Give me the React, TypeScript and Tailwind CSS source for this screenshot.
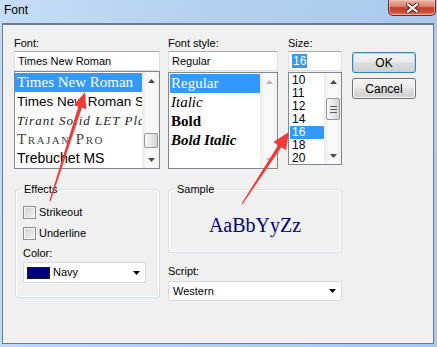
import React from 'react';

const sans = "font-['Liberation_Sans',Arial,sans-serif]";
const serif = "font-['Liberation_Serif','Times_New_Roman',serif]";

const Tri: React.FC<{ down?: boolean; color?: string }> = ({ down, color = '#3f3f3f' }) => (
  <svg width="7" height="4" viewBox="0 0 7 4">
    <path d={down ? 'M0 0H7L3.5 4Z' : 'M0 4H7L3.5 0Z'} fill={color} />
  </svg>
);

// win7 list scrollbar; thumbClass carries the offset/height of the thumb
const ScrollBar: React.FC<{ thumbClass?: string; grip?: boolean; disabled?: boolean }> = ({
  thumbClass,
  grip,
  disabled,
}) => {
  const arrow = disabled ? '#b8b8b8' : '#4a4a4a';
  return (
    <div className="flex w-[17px] shrink-0 flex-col border-l border-[#ececec] bg-[linear-gradient(90deg,#eeeeee,#f8f8f8_25%,#f8f8f8_75%,#efefef)]">
      <div className="flex h-[17px] items-center justify-center">
        <Tri color={arrow} />
      </div>
      <div className="flex-1 px-[1px]">
        {thumbClass && (
          <div
            className={`flex flex-col items-center justify-center gap-[2px] rounded-[2px] border border-[#979797] bg-[linear-gradient(90deg,#f5f5f5,#e8e8e8_50%,#d4d4d4)] ${thumbClass}`}
          >
            {grip && (
              <>
                <div className="h-[1px] w-[7px] bg-[#5e5e5e]" />
                <div className="h-[1px] w-[7px] bg-[#5e5e5e]" />
                <div className="h-[1px] w-[7px] bg-[#5e5e5e]" />
              </>
            )}
          </div>
        )}
      </div>
      <div className="flex h-[17px] items-center justify-center">
        <Tri down color={arrow} />
      </div>
    </div>
  );
};

const TextBox: React.FC<{ className?: string; children: React.ReactNode }> = ({ className = '', children }) => (
  <div
    className={`flex h-[20px] items-center border border-[#dbdfe6] border-t-[#abadb3] bg-white pl-[3px] ${className}`}
  >
    {children}
  </div>
);

const Label: React.FC<{ children: React.ReactNode; className?: string }> = ({ children, className = '' }) => (
  <div className={`h-[14px] leading-[13px] ${className}`}>{children}</div>
);

const Button: React.FC<{ children: React.ReactNode; focused?: boolean; className?: string }> = ({
  children,
  focused,
  className = '',
}) => (
  <div
    className={`flex h-[21px] w-[64px] items-center justify-center rounded-[3px] border text-[12px] bg-[linear-gradient(#f2f2f2_0%,#ebebeb_48%,#dddddd_52%,#cfcfcf_100%)] ${
      focused ? 'border-[#3c7fb1] shadow-[inset_0_0_0_1px_#a7dcf7]' : 'border-[#707070] shadow-[inset_0_0_0_1px_#fbfbfb]'
    } ${className}`}
  >
    {children}
  </div>
);

const CheckRow: React.FC<{ label: string; className?: string }> = ({ label, className = '' }) => (
  <div className={`flex h-[13px] items-center gap-[3px] ${className}`}>
    <div className="h-[13px] w-[13px] border border-[#8e8f8f] bg-[linear-gradient(135deg,#cfd1d4,#f3f3f3)] shadow-[inset_0_0_0_1px_#f4f4f4]" />
    <span className="leading-[13px]">{label}</span>
  </div>
);

const arrowPoints = (tx: number, ty: number, px: number, py: number, hl: number, hw: number) => {
  const dx = px - tx;
  const dy = py - ty;
  const len = Math.hypot(dx, dy);
  const ux = dx / len;
  const uy = dy / len;
  const nx = -uy;
  const ny = ux;
  const bx = px - ux * hl;
  const by = py - uy * hl;
  const pts = [
    [tx + nx * 0.6, ty + ny * 0.6],
    [bx + nx * 1.9, by + ny * 1.9],
    [bx + (nx * hw) / 2, by + (ny * hw) / 2],
    [px, py],
    [bx - (nx * hw) / 2, by - (ny * hw) / 2],
    [bx - nx * 1.9, by - ny * 1.9],
    [tx - nx * 0.6, ty - ny * 0.6],
  ];
  return pts.map((p) => p.map((v) => v.toFixed(1)).join(',')).join(' ');
};

const fontRows = [
  { label: 'Times New Roman', cls: `${serif} text-[15px]`, selected: true },
  { label: 'Times New Roman S', cls: `${sans} text-[13.5px]` },
  { label: 'Tirant Solid LET Plain', cls: `${serif} italic text-[13px] tracking-[1px] text-[#222]` },
  { label: 'Trajan Pro', cls: `${serif} text-[15px] [font-variant:small-caps] tracking-[1.5px] text-[#444]` },
  { label: 'Trebuchet MS', cls: `${sans} text-[14px]` },
];

const styleRows = [
  { label: 'Regular', cls: '', selected: true },
  { label: 'Italic', cls: 'italic' },
  { label: 'Bold', cls: 'font-bold' },
  { label: 'Bold Italic', cls: 'font-bold italic' },
];

const sizes = ['10', '11', '12', '14', '16', '18', '20'];

export default function App() {
  return (
    <div
      className={`relative flex h-[347px] w-[437px] flex-col overflow-hidden bg-[linear-gradient(100deg,#c6ddf6,#b3d0ef_45%,#a9c8ea)] text-[11px] text-black ${sans}`}
    >
      {/* title bar */}
      <div className="flex h-[23px] shrink-0 items-start justify-between pr-[1px]">
        <div className="pl-[4px] pt-[3px] text-[12px] leading-[14px]">Font</div>
        <div className="flex h-[16px] w-[48px] items-center justify-center rounded-b-[5px] border border-t-0 border-[#6f2b22] bg-[linear-gradient(#eab0a3_0%,#db8373_42%,#c2412e_52%,#c84b36_80%,#e38b70_100%)] shadow-[inset_0_0_0_1px_rgba(255,220,210,0.45)]">
          <svg width="13" height="10" viewBox="0 0 13 10">
            <path d="M2 1.5L11 8.5M11 1.5L2 8.5" stroke="#4a1a12" strokeWidth="4" strokeLinecap="square" />
            <path d="M2 1.5L11 8.5M11 1.5L2 8.5" stroke="#ffffff" strokeWidth="2.2" strokeLinecap="square" />
          </svg>
        </div>
      </div>

      {/* client area */}
      <div className="mb-[3px] ml-[2px] mr-[3px] flex flex-1 flex-col border border-t-2 border-[#6b7c8e] bg-[#f0f0f0] pl-[11px] pt-[12px]">
        <div className="flex">
          {/* Font */}
          <div className="flex w-[146px] flex-col">
            <Label>Font:</Label>
            <TextBox>Times New Roman</TextBox>
            <div className="flex h-[98px] border border-[#828790] bg-white">
              <div className="flex flex-1 flex-col overflow-hidden pt-[1px]">
                {fontRows.map((r) => (
                  <div
                    key={r.label}
                    className={`flex h-[19px] shrink-0 items-center whitespace-nowrap pl-[2px] leading-[19px] ${r.cls} ${
                      r.selected ? 'bg-[#3399ff] text-white' : ''
                    }`}
                  >
                    {r.label}
                  </div>
                ))}
              </div>
              <ScrollBar thumbClass="mt-[44px] h-[15px]" />
            </div>
          </div>

          {/* Font style */}
          <div className="ml-[8px] flex w-[110px] flex-col">
            <Label>Font style:</Label>
            <TextBox>Regular</TextBox>
            <div className="mt-[1px] flex h-[97px] border border-[#828790] bg-white">
              <div className="flex flex-1 flex-col overflow-hidden pl-[1px] pt-[1px]">
                {styleRows.map((r) => (
                  <div
                    key={r.label}
                    className={`flex h-[19px] shrink-0 items-center whitespace-nowrap pl-[1px] text-[15px] leading-[19px] ${serif} ${r.cls} ${
                      r.selected ? 'bg-[#3399ff] text-white' : ''
                    }`}
                  >
                    {r.label}
                  </div>
                ))}
              </div>
              <ScrollBar disabled />
            </div>
          </div>

          {/* Size */}
          <div className="ml-[10px] flex w-[54px] flex-col">
            <Label>Size:</Label>
            <TextBox className="border-[#c5dbef] border-t-[#8fb5da] pl-[2px]">
              <span className="bg-[#3399ff] px-[1px] text-[12px] leading-[14px] text-white">16</span>
            </TextBox>
            <div className="mt-[1px] flex h-[93px] border border-[#828790] bg-white">
              <div className="flex flex-1 flex-col overflow-hidden pl-[1px] pt-[1px]">
                {sizes.map((s) => (
                  <div
                    key={s}
                    className={`flex h-[13px] shrink-0 items-center pl-[2px] text-[12px] leading-[13px] ${
                      s === '16' ? 'bg-[#3399ff] text-white' : ''
                    }`}
                  >
                    {s}
                  </div>
                ))}
              </div>
              <ScrollBar thumbClass="mt-[8px] h-[22px]" grip />
            </div>
          </div>

          {/* buttons */}
          <div className="ml-[10px] mt-[15px] flex flex-col gap-[5px]">
            <Button focused>OK</Button>
            <Button>Cancel</Button>
          </div>
        </div>

        <div className="mt-[14px] flex">
          {/* Effects */}
          <fieldset className="ml-[1px] flex h-[115px] w-[145px] flex-col rounded-[3px] border border-[#d5dfe5] px-[7px] pt-[10px] shadow-[inset_0_0_0_1px_#ffffff]">
            <legend className="-ml-[1px] px-[2px] leading-[13px]">Effects</legend>
            <CheckRow label="Strikeout" />
            <CheckRow label="Underline" className="mt-[8px]" />
            <div className="mt-[7px] leading-[13px]">Color:</div>
            <div className="mt-[2px] flex h-[21px] w-[123px] items-center rounded-[2px] border border-[#d9d9d9] bg-white pl-[3px] pr-[5px]">
              <div className="h-[12px] w-[23px] border border-[#1a1a1a] bg-[#000080]" />
              <span className="ml-[3px] flex-1">Navy</span>
              <Tri down color="#000000" />
            </div>
          </fieldset>

          {/* Sample / Script */}
          <div className="ml-[8px] flex w-[174px] flex-col">
            <fieldset className="flex h-[70px] flex-col items-center rounded-[3px] border border-[#d5dfe5] shadow-[inset_0_0_0_1px_#ffffff]">
              <legend className="ml-[6px] px-[2px] leading-[13px]">Sample</legend>
              <div className={`mt-[18px] text-[20px] leading-[23px] text-[#000080] ${serif}`}>AaBbYyZz</div>
            </fieldset>
            <div className="mt-[12px] leading-[13px]">Script:</div>
            <div className="mt-[3px] flex h-[20px] items-center rounded-[2px] border border-[#d9d9d9] bg-white pl-[4px] pr-[5px]">
              <span className="flex-1">Western</span>
              <Tri down color="#000000" />
            </div>
          </div>
        </div>
      </div>

      {/* annotation arrows */}
      <svg className="pointer-events-none absolute inset-0" width="437" height="347" viewBox="0 0 437 347">
        <polygon points={arrowPoints(50, 201, 85, 92, 16, 13)} fill="#ef3a3a" />
        <polygon points={arrowPoints(242, 204, 289, 132, 17, 15)} fill="#ef3a3a" />
      </svg>
    </div>
  );
}
